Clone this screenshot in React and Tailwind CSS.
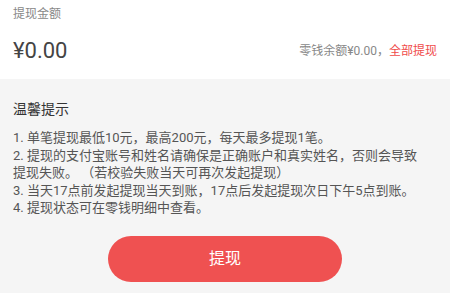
import React from 'react';

const tips = [
  '1. 单笔提现最低10元，最高200元，每天最多提现1笔。',
  '2. 提现的支付宝账号和姓名请确保是正确账户和真实姓名，否则会导致',
  '提现失败。 （若校验失败当天可再次发起提现）',
  '3. 当天17点前发起提现当天到账，17点后发起提现次日下午5点到账。',
  '4. 提现状态可在零钱明细中查看。',
];

const App = () => {
  return (
    <div
      className="w-[450px] h-[293px] overflow-hidden bg-[#f5f5f5]"
      style={{ fontFamily: 'Roboto, "Noto Sans CJK SC", sans-serif' }}
    >
      {/* amount */}
      <div className="bg-white h-[79px] px-[13px] pt-[6px]">
        <div className="text-[12px] leading-[16px] text-[#888]">提现金额</div>
        <div className="mt-[16px] flex items-center justify-between">
          <div className="text-[22px] leading-[26px] text-[#444]">¥0.00</div>
          <div className="text-[12px] leading-[16px] text-[#888]">
            零钱余额¥0.00，<span className="text-[#f04b4b]">全部提现</span>
          </div>
        </div>
      </div>

      {/* tips */}
      <div className="px-[13px] pt-[20px]">
        <div className="text-[14px] leading-[20px] text-[#333]">温馨提示</div>
        <div className="mt-[10px] text-[13px] leading-[17.5px] text-[#555]">
          {tips.map((t) => (
            <div key={t} className="whitespace-pre">
              {t}
            </div>
          ))}
        </div>
        <button className="mt-[19px] mx-auto flex items-center justify-center w-[234px] h-[46px] rounded-full bg-[#ef5151] text-white text-[16px]">
          提现
        </button>
      </div>
    </div>
  );
};

export default App;
